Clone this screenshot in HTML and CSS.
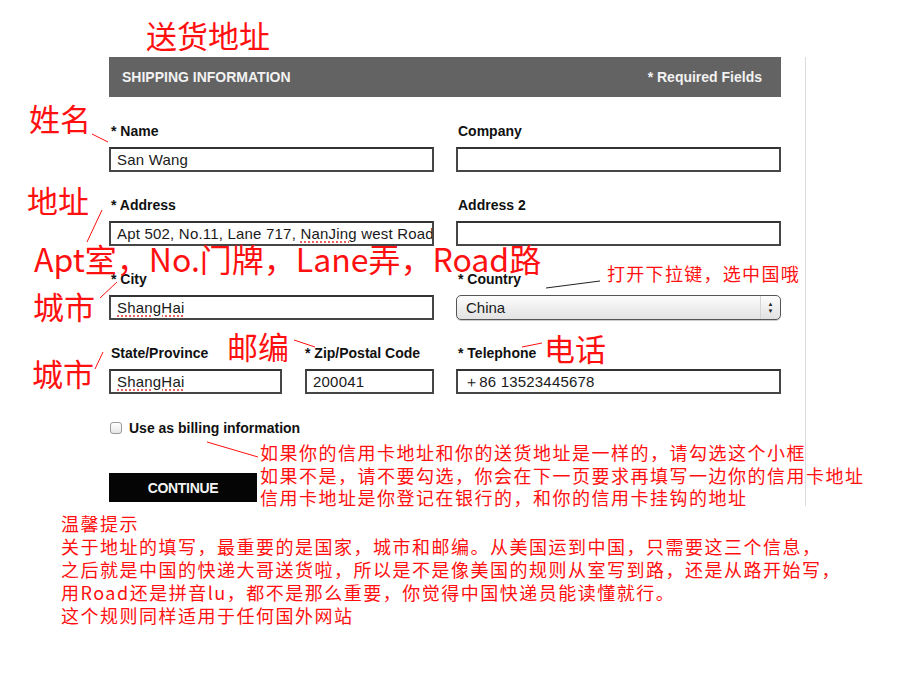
FILE: index.html
```html
<!DOCTYPE html>
<html lang="zh">
<head>
<meta charset="utf-8">
<title>Shipping Information</title>
<link rel="stylesheet" href="styles.css">
</head>
<body>
<div class="page">
  <div class="sheet">
    <div class="form-wrap">
      <div class="bar">
        <span class="bar-title">SHIPPING INFORMATION</span>
        <span class="bar-note">* Required Fields</span>
      </div>
      <div class="grid">
        <div class="cell">
          <div class="label">* Name</div>
          <div class="field">San Wang</div>
        </div>
        <div class="cell">
          <div class="label">Company</div>
          <div class="field"></div>
        </div>
        <div class="cell">
          <div class="label">* Address</div>
          <div class="field">Apt 502, No.11, Lane 717, <span class="typo">NanJing</span> west Road</div>
        </div>
        <div class="cell">
          <div class="label">Address 2</div>
          <div class="field"></div>
        </div>
        <div class="cell">
          <div class="label">* City</div>
          <div class="field"><span class="typo">ShangHai</span></div>
        </div>
        <div class="cell">
          <div class="label">* Country</div>
          <div class="select">
            <span class="select-value">China</span>
            <span class="select-arrows"><span class="arr">&#9650;</span><span class="arr">&#9660;</span></span>
          </div>
        </div>
        <div class="cell split">
          <div class="sub sub-state">
            <div class="label">State/Province</div>
            <div class="field"><span class="typo">ShangHai</span></div>
          </div>
          <div class="sub sub-zip">
            <div class="label">* Zip/Postal Code</div>
            <div class="field">200041</div>
          </div>
        </div>
        <div class="cell">
          <div class="label">* Telephone</div>
          <div class="field">＋86 13523445678</div>
        </div>
      </div>
      <div class="check-row">
        <span class="checkbox"></span>
        <span class="check-label">Use as billing information</span>
      </div>
      <div class="continue">CONTINUE</div>
    </div>
    <div class="tips">
      <p>温馨提示</p>
      <p>关于地址的填写，最重要的是国家，城市和邮编。从美国运到中国，只需要这三个信息，</p>
      <p>之后就是中国的快递大哥送货啦，所以是不是像美国的规则从室写到路，还是从路开始写，</p>
      <p>用Road还是拼音lu，都不是那么重要，你觉得中国快递员能读懂就行。</p>
      <p>这个规则同样适用于任何国外网站</p>
    </div>
  </div>

  <div class="note n-title">送货地址</div>
  <div class="note n-name">姓名</div>
  <div class="note n-addr">地址</div>
  <div class="note n-apt">Apt室，No.门牌，Lane弄，Road路</div>
  <div class="note n-city1">城市</div>
  <div class="note n-country">打开下拉键，选中国哦</div>
  <div class="note n-zip">邮编</div>
  <div class="note n-city2">城市</div>
  <div class="note n-tel">电话</div>
  <div class="note n-billing">
    <p>如果你的信用卡地址和你的送货地址是一样的，请勾选这个小框</p>
    <p>如果不是，请不要勾选，你会在下一页要求再填写一边你的信用卡地址</p>
    <p>信用卡地址是你登记在银行的，和你的信用卡挂钩的地址</p>
  </div>

  <svg class="leaders" width="906" height="673" viewBox="0 0 906 673">
    <g stroke="#ff1010" stroke-width="1" fill="none">
      <line x1="92" y1="134" x2="108" y2="142"/>
      <line x1="87" y1="242" x2="102" y2="210"/>
      <line x1="100" y1="298" x2="117" y2="282"/>
      <line x1="95" y1="369" x2="103" y2="352"/>
      <line x1="294" y1="340" x2="315" y2="347"/>
      <line x1="522" y1="347" x2="542" y2="343"/>
      <line x1="207" y1="442" x2="258" y2="457"/>
    </g>
    <line x1="546" y1="288" x2="600" y2="281" stroke="#222" stroke-width="1"/>
  </svg>
</div>
</body>
</html>
```

FILE: styles.css
```css
* { box-sizing: border-box; }
html, body { margin: 0; padding: 0; background: #fff; }
body { font-family: "Liberation Sans", Arial, sans-serif; color: #111; }

.page {
  position: relative;
  width: 906px;
  height: 673px;
  overflow: hidden;
}

.sheet {
  padding-top: 57px;
}

.form-wrap {
  margin-left: 109px;
  width: 697px;
  padding-right: 24px;
  padding-bottom: 4px;
  border-right: 1px solid #dadada;
}

.bar {
  height: 40px;
  background: #636363;
  display: flex;
  align-items: center;
  justify-content: space-between;
  padding: 0 19px 0 13px;
  color: #f2f2f2;
  font-weight: bold;
  font-size: 14px;
}

.grid {
  display: grid;
  grid-template-columns: 325px 325px;
  column-gap: 22px;
  row-gap: 25px;
  padding-top: 26px;
}

.label {
  font-size: 14px;
  font-weight: bold;
  line-height: 16px;
  height: 16px;
  margin-bottom: 8px;
  padding-left: 2px;
  color: #111;
  white-space: nowrap;
}

.field {
  height: 25px;
  border: 2px solid #464646;
  border-top-color: #333;
  background: #fff;
  font-size: 15px;
  letter-spacing: 0.2px;
  line-height: 21px;
  padding: 0 6px;
  color: #1a1a1a;
  white-space: nowrap;
  overflow: hidden;
}

.typo {
  text-decoration: underline dotted #e03030;
  text-underline-offset: 3px;
}

.select {
  height: 25px;
  border: 1px solid #555;
  border-radius: 5px;
  background: linear-gradient(#fdfdfd, #ececec 60%, #e2e2e2);
  display: flex;
  align-items: center;
  justify-content: space-between;
  box-shadow: 0 1px 0 #ccc;
  font-size: 15px;
  color: #1a1a1a;
  padding-left: 9px;
}

.select-arrows {
  width: 20px;
  height: 100%;
  border-left: 1px solid #d4d4d4;
  display: flex;
  flex-direction: column;
  align-items: center;
  justify-content: center;
  gap: 1px;
}

.arr {
  font-size: 6px;
  line-height: 6px;
  color: #222;
}

.split {
  display: flex;
  gap: 23px;
}
.sub-state { width: 173px; }
.sub-zip { width: 129px; }
.sub-zip .label { padding-left: 0; }

.check-row {
  display: flex;
  align-items: center;
  gap: 7px;
  margin-top: 26px;
  height: 16px;
  padding-left: 1px;
}

.checkbox {
  width: 12px;
  height: 12px;
  border: 1px solid #9a9a9a;
  border-radius: 3px;
  background: linear-gradient(#fff, #e6e6e6);
}

.check-label {
  font-size: 14px;
  font-weight: bold;
}

.continue {
  margin-top: 37px;
  width: 148px;
  height: 29px;
  background: #050505;
  color: #f4f4f4;
  font-weight: bold;
  font-size: 14px;
  letter-spacing: -0.3px;
  display: flex;
  align-items: center;
  justify-content: center;
}

.tips {
  margin: 6px 0 0 61px;
  font-family: "Noto Sans CJK SC", sans-serif;
  color: #ff1010;
  font-size: 18px;
  letter-spacing: 1.5px;
  line-height: 23px;
}
.tips p { margin: 0; white-space: nowrap; }

.note {
  position: absolute;
  font-family: "Noto Sans CJK SC", sans-serif;
  color: #ff1010;
  line-height: 1;
  white-space: nowrap;
}

.n-title { left: 146px; top: 19px; font-size: 31px; }
.n-name { left: 29px; top: 102px; font-size: 31px; }
.n-addr { left: 27px; top: 184px; font-size: 31px; }
.n-apt { left: 34px; top: 242px; font-size: 32px; }
.n-city1 { left: 33px; top: 290px; font-size: 31px; }
.n-country { left: 607px; top: 264px; font-size: 18px; letter-spacing: 1.3px; }
.n-zip { left: 227px; top: 330px; font-size: 31px; }
.n-city2 { left: 32px; top: 357px; font-size: 31px; }
.n-tel { left: 544px; top: 332px; font-size: 31px; }

.n-billing {
  left: 260px;
  top: 441px;
  font-size: 18px;
  letter-spacing: 1.5px;
  line-height: 22.5px;
}
.n-billing p { margin: 0; }

.leaders {
  position: absolute;
  left: 0;
  top: 0;
  pointer-events: none;
}
```
